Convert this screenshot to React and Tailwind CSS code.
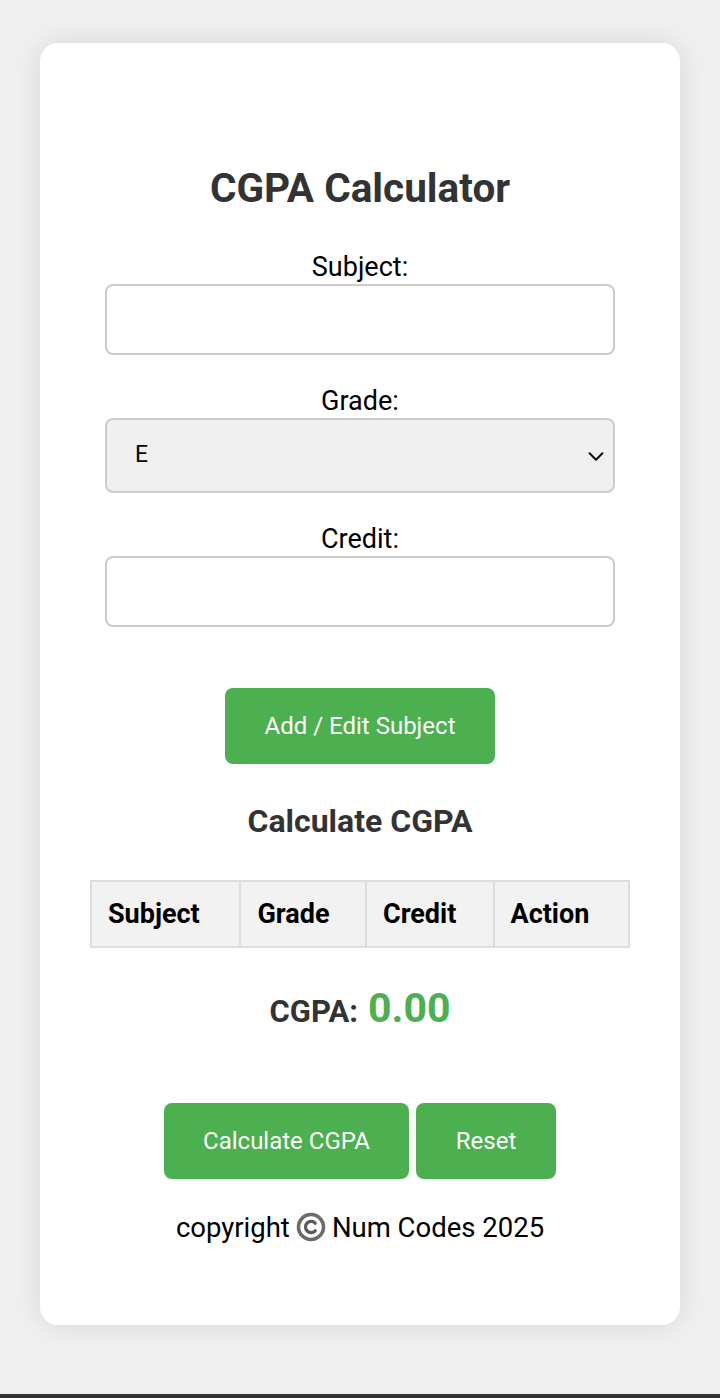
import React from 'react';

const font = { fontFamily: 'Roboto, "Liberation Sans", sans-serif' };

const Field = ({ label, children }) => (
    <div className="flex flex-col items-center">
        <label className="text-[27px] leading-[32px] text-black">{label}</label>
        {children}
    </div>
);

const CopyIcon = () => (
    <svg className="inline-block align-[-5px] mx-[6px]" width="30" height="30" viewBox="0 0 30 30" aria-label="©">
        <circle cx="15" cy="15" r="12.5" fill="none" stroke="#6b6b6b" strokeWidth="3.6" />
        <path d="M19.2 11.2a5.6 5.6 0 1 0 0 7.6" fill="none" stroke="#5a5a5a" strokeWidth="3.2" strokeLinecap="round" />
    </svg>
);

const App = () => {
    return (
        <div className="min-h-[1398px] bg-[#f0f0f0] flex flex-col" style={font}>
            <div className="flex-1 pt-[43px]">
                <div className="mx-auto w-[640px] h-[1282px] bg-white rounded-[18px] shadow-[0_0_28px_rgba(0,0,0,0.11)] flex flex-col items-center">
                    <h1 className="mt-[121px] text-[40.5px] leading-[48px] font-bold text-[#333]">CGPA Calculator</h1>

                    <div className="mt-[39px] flex flex-col gap-[30px]">
                        <Field label="Subject:">
                            <input className="mt-[1px] w-[510px] h-[71px] border-2 border-[#ccc] rounded-[8px] bg-white px-4 text-[24px] outline-none" />
                        </Field>
                        <Field label="Grade:">
                            <div className="mt-[1px] w-[510px] h-[75px] border-2 border-[#ccc] rounded-[8px] bg-[#efefef] flex items-center justify-between pl-[28px] pr-[6px]">
                                <span className="text-[23px] text-black">E</span>
                                <svg width="22" height="22" viewBox="0 0 24 24" fill="none" stroke="#111" strokeWidth="2.2" strokeLinecap="round" strokeLinejoin="round">
                                    <path d="M5 9l7 7 7-7" />
                                </svg>
                            </div>
                        </Field>
                        <Field label="Credit:">
                            <input className="mt-[1px] w-[510px] h-[71px] border-2 border-[#ccc] rounded-[8px] bg-white px-4 text-[24px] outline-none" />
                        </Field>
                    </div>

                    <button className="mt-[61px] w-[270px] h-[76px] bg-[#4caf50] text-white text-[24px] rounded-[8px]">Add / Edit Subject</button>

                    <h3 className="mt-[37px] text-[32px] leading-[40px] font-bold text-[#333]">Calculate CGPA</h3>

                    <table className="mt-[39px] w-[540px] border-collapse border-2 border-[#ddd]">
                        <thead>
                            <tr className="bg-[#f2f2f2] h-[66px]">
                                <th className="w-[150px] border-2 border-[#ddd] text-left pl-[16px] text-[27px] font-bold text-black">Subject</th>
                                <th className="w-[126px] border-2 border-[#ddd] text-left pl-[16px] text-[27px] font-bold text-black">Grade</th>
                                <th className="w-[128px] border-2 border-[#ddd] text-left pl-[16px] text-[27px] font-bold text-black">Credit</th>
                                <th className="w-[136px] border-2 border-[#ddd] text-left pl-[16px] text-[27px] font-bold text-black">Action</th>
                            </tr>
                        </thead>
                    </table>

                    <div className="mt-[30px] flex items-baseline gap-[10px] text-[#333] font-bold">
                        <span className="text-[31px]">CGPA:</span>
                        <span className="text-[41px] text-[#4caf50]">0.00</span>
                    </div>

                    <div className="mt-[63px] flex gap-[7px]">
                        <button className="w-[245px] h-[76px] bg-[#4caf50] text-white text-[24px] rounded-[8px]">Calculate CGPA</button>
                        <button className="w-[140px] h-[76px] bg-[#4caf50] text-white text-[24px] rounded-[8px]">Reset</button>
                    </div>

                    <p className="mt-[29px] text-[27.5px] leading-[40px] text-black">
                        copyright<CopyIcon />Num Codes 2025
                    </p>
                </div>
            </div>
            <div className="h-[4px] bg-[#333]"></div>
        </div>
    );
};

export default App;
